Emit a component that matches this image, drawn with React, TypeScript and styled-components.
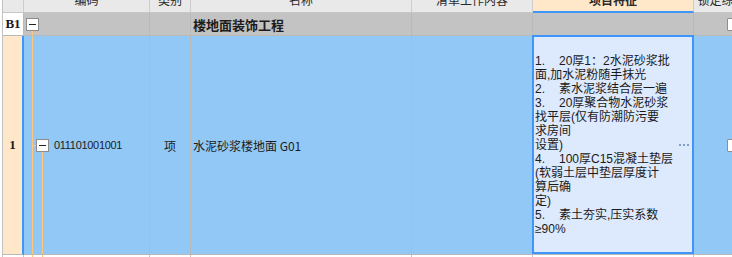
import React from 'react';
import styled, { createGlobalStyle, css } from 'styled-components';

const Global = createGlobalStyle`
  html, body { margin: 0; padding: 0; background: #fff; overflow: hidden; }
  body {
    font-family: "Noto Sans CJK SC", "Noto Sans", sans-serif;
    color: #1c1c1c;
    font-size: 12px;
  }
  * { box-sizing: border-box; }
`;

const ORANGE = '#ffc67c';
const BLUE = '#3f96f8';
const COLS = '21px 126px 41px 221px 121px 161px 80px';

const Table = styled.div`
  margin-left: 2px;
  border-left: 1px solid #c2c2c2;
  width: 772px;
`;

const Row = styled.div<{ $h: number; $bg: string }>`
  display: grid;
  grid-template-columns: ${COLS};
  height: ${(p) => p.$h}px;
  background: ${(p) => p.$bg};
`;

const Cell = styled.div<{ $line?: string; $bottom?: boolean }>`
  border-right: 1px solid ${(p) => p.$line || '#b9b9b9'};
  border-bottom: ${(p) => (p.$bottom === false ? 'none' : `1px solid ${p.$line || '#b9b9b9'}`)};
  display: flex;
  align-items: center;
  min-width: 0;
  white-space: nowrap;
`;

/* header */
const HeadCell = styled.div<{ $active?: boolean }>`
  background: ${(p) => (p.$active ? '#ffe8c9' : '#e9e9e9')};
  border-right: 1px solid #cdcdcd;
  border-bottom: ${(p) => (p.$active ? `2px solid ${BLUE}` : '1px solid #c6c6c6')};
  display: flex;
  justify-content: center;
  align-items: flex-end;
  overflow: hidden;
`;

const HeadLabel = styled.span<{ $active?: boolean }>`
  font-size: 12px;
  line-height: 14px;
  margin-bottom: ${(p) => (p.$active ? 4 : 5)}px;
  white-space: nowrap;
  color: #2a2a2a;
  font-weight: ${(p) => (p.$active ? 700 : 400)};
`;

/* row header */
const RowHead = styled(Cell)<{ $bg: string; $selected?: boolean }>`
  background: ${(p) => p.$bg};
  justify-content: center;
  font-family: "Liberation Serif", "DejaVu Serif", serif;
  font-weight: 700;
  font-size: 13px;
  color: #1a1a1a;
  ${(p) =>
    p.$selected &&
    css`
      border-right: 2px solid ${BLUE};
    `}
`;

/* tree */
const TreeCell = styled(Cell)`
  align-items: stretch;
  padding-left: 2px;
`;

const Branch = styled.div`
  width: 13px;
  flex: none;
  display: flex;
  flex-direction: column;
  align-items: center;
`;

const Spacer = styled.div`
  flex: 1;
`;

const VLine = styled.div`
  flex: 1;
  width: 1px;
  background: ${ORANGE};
`;

const Rail = styled.div`
  width: 4px;
  margin-left: 6px;
  flex: none;
  border-left: 1px solid ${ORANGE};
  display: flex;
  align-items: center;
`;

const Connector = styled.div`
  width: 3px;
  height: 1px;
  background: ${ORANGE};
`;

const ToggleBox = styled.div`
  width: 13px;
  height: 13px;
  flex: none;
  border: 1px solid #8c8c8c;
  background: #fff;
  display: flex;
  align-items: center;
  justify-content: center;
  &::before {
    content: '';
    width: 7px;
    height: 1px;
    background: #222;
  }
`;

const Code = styled.span`
  align-self: center;
  margin-left: 5px;
  font-family: "Liberation Sans", Arial, sans-serif;
  font-size: 11px;
  letter-spacing: -0.3px;
  color: #1c1c1c;
`;

const TextCell = styled(Cell)<{ $center?: boolean; $bold?: boolean }>`
  justify-content: ${(p) => (p.$center ? 'center' : 'flex-start')};
  padding-left: ${(p) => (p.$center ? 0 : 2)}px;
  font-size: ${(p) => (p.$bold ? 13 : 12)}px;
  font-weight: ${(p) => (p.$bold ? 700 : 400)};
  overflow: hidden;
`;

const CheckCell = styled(Cell)`
  justify-content: center;
`;

const Check = styled.div`
  width: 13px;
  height: 13px;
  border: 1px solid #8e8e8e;
  border-radius: 1px;
  background: #fff;
`;

/* selected feature cell */
const FeatureCell = styled(Cell)`
  position: relative;
  background: #dde9fd;
  padding: 0 4px 0 2px;
  &::after {
    content: '';
    position: absolute;
    left: -1px;
    top: -1px;
    right: -1px;
    bottom: 0;
    border: 2px solid ${BLUE};
    pointer-events: none;
  }
`;

const FeatureText = styled.div`
  flex: 1;
  font-family: "Liberation Sans", "Noto Sans CJK SC", sans-serif;
  font-size: 12px;
  line-height: 14px;
  color: #1a1a1a;
`;

const Line = styled.div`
  white-space: nowrap;
  height: 14px;
`;

const Num = styled.span`
  display: inline-block;
  width: 24px;
`;

const Dots = styled.div`
  display: flex;
  gap: 2px;
  align-self: center;
  flex: none;
`;

const Dot = styled.span`
  width: 2px;
  height: 2px;
  background: #7f9fc8;
`;

type FLine = { n?: string; t: string };
const featureLines: FLine[] = [
  { n: '1.', t: '20厚1：2水泥砂浆批' },
  { t: '面,加水泥粉随手抹光' },
  { n: '2.', t: '素水泥浆结合层一遍' },
  { n: '3.', t: '20厚聚合物水泥砂浆' },
  { t: '找平层(仅有防潮防污要' },
  { t: '求房间' },
  { t: '设置)' },
  { n: '4.', t: '100厚C15混凝土垫层' },
  { t: '(软弱土层中垫层厚度计' },
  { t: '算后确' },
  { t: '定)' },
  { n: '5.', t: '素土夯实,压实系数' },
  { t: '≥90%' },
];

export default function App() {
  return (
    <>
      <Global />
      <Table>
        <Row $h={13} $bg="#e9e9e9">
          <HeadCell />
          <HeadCell><HeadLabel>编码</HeadLabel></HeadCell>
          <HeadCell><HeadLabel>类别</HeadLabel></HeadCell>
          <HeadCell><HeadLabel>名称</HeadLabel></HeadCell>
          <HeadCell><HeadLabel>清单工作内容</HeadLabel></HeadCell>
          <HeadCell $active><HeadLabel $active>项目特征</HeadLabel></HeadCell>
          <HeadCell><HeadLabel>锁定综合单价</HeadLabel></HeadCell>
        </Row>

        <Row $h={23} $bg="#c3c3c3">
          <RowHead $bg="#ffffff">B1</RowHead>
          <TreeCell>
            <Branch>
              <Spacer />
              <ToggleBox />
              <VLine />
            </Branch>
          </TreeCell>
          <Cell />
          <TextCell $bold>楼地面装饰工程</TextCell>
          <Cell />
          <Cell />
          <CheckCell><Check /></CheckCell>
        </Row>

        <Row $h={219} $bg="#92c8f5">
          <RowHead $bg="#ffe7ca" $selected>1</RowHead>
          <TreeCell>
            <Rail><Connector /></Rail>
            <Branch>
              <Spacer />
              <ToggleBox />
              <VLine />
            </Branch>
            <Code>011101001001</Code>
          </TreeCell>
          <TextCell $center>项</TextCell>
          <TextCell>水泥砂浆楼地面 G01</TextCell>
          <Cell />
          <FeatureCell>
            <FeatureText>
              {featureLines.map((l, i) => (
                <Line key={i}>
                  {l.n && <Num>{l.n}</Num>}
                  {l.t}
                </Line>
              ))}
            </FeatureText>
            <Dots>
              <Dot />
              <Dot />
              <Dot />
            </Dots>
          </FeatureCell>
          <CheckCell><Check /></CheckCell>
        </Row>

        <Row $h={10} $bg="#ffffff">
          <Cell $line="#c2c2c2" $bottom={false} />
          <TreeCell $line="#c2c2c2" $bottom={false}>
            <Rail />
            <Branch>
              <VLine />
            </Branch>
          </TreeCell>
          <Cell $line="#c2c2c2" $bottom={false} />
          <Cell $line="#c2c2c2" $bottom={false} />
          <Cell $line="#c2c2c2" $bottom={false} />
          <Cell $line="#c2c2c2" $bottom={false} />
          <Cell $line="#c2c2c2" $bottom={false} />
        </Row>
      </Table>
    </>
  );
}
